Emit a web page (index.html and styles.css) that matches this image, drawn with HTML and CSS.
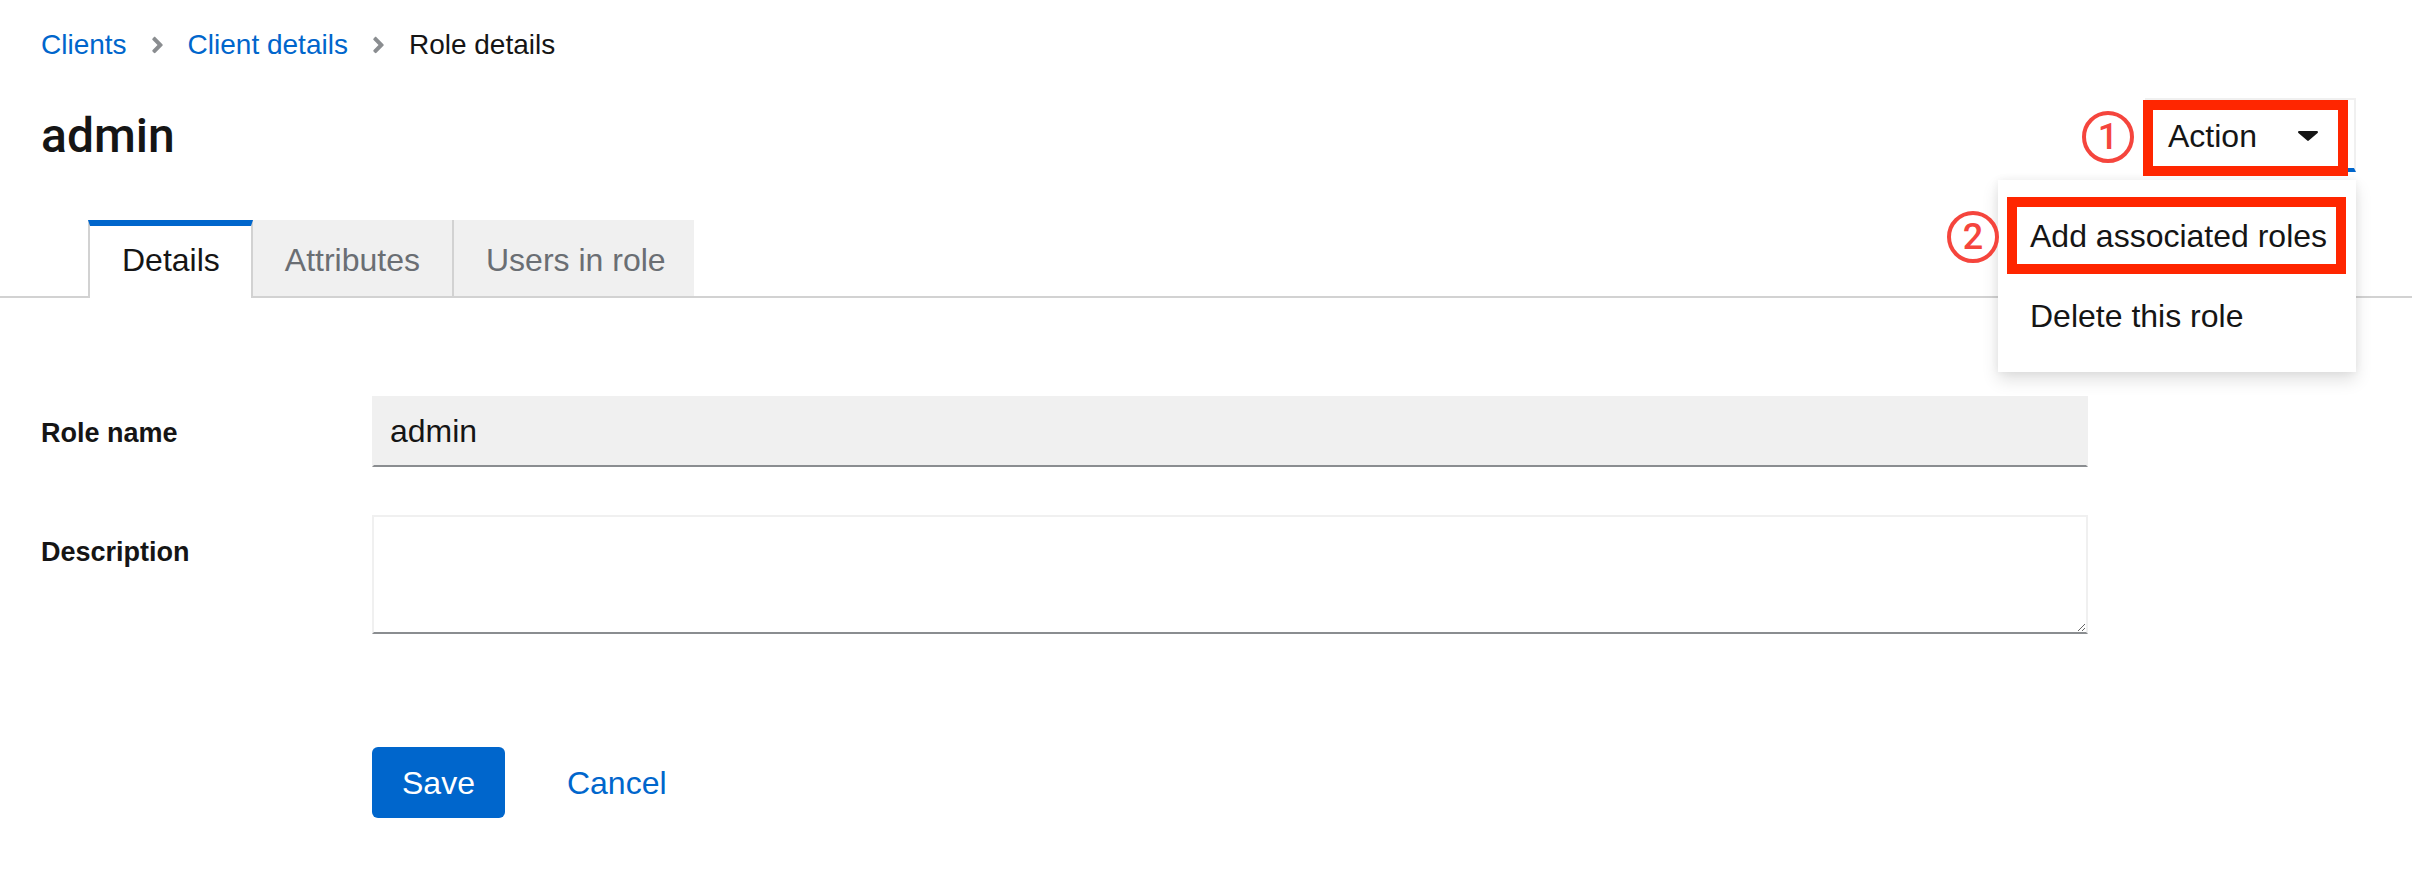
FILE: index.html
```html
<!DOCTYPE html>
<html lang="en">
<head>
<meta charset="utf-8">
<title>Role details</title>
<link rel="stylesheet" href="styles.css">
</head>
<body>
<div class="page">
  <header class="page-header">
    <nav class="breadcrumb">
      <a class="crumb-link" href="#">Clients</a>
      <svg class="chev" viewBox="0 0 256 512"><path d="M224.3 273l-136 136c-9.4 9.4-24.6 9.4-33.9 0l-22.6-22.6c-9.4-9.4-9.4-24.6 0-33.9l96.4-96.4-96.4-96.4c-9.4-9.4-9.4-24.6 0-33.9L54.3 103c9.4-9.4 24.6-9.4 33.9 0l136 136c9.5 9.4 9.5 24.6.1 34z"/></svg>
      <a class="crumb-link" href="#">Client details</a>
      <svg class="chev" viewBox="0 0 256 512"><path d="M224.3 273l-136 136c-9.4 9.4-24.6 9.4-33.9 0l-22.6-22.6c-9.4-9.4-9.4-24.6 0-33.9l96.4-96.4-96.4-96.4c-9.4-9.4-9.4-24.6 0-33.9L54.3 103c9.4-9.4 24.6-9.4 33.9 0l136 136c9.5 9.4 9.5 24.6.1 34z"/></svg>
      <span class="crumb-current">Role details</span>
    </nav>
    <div class="title-row">
      <h1 class="title">admin</h1>
      <div class="dropdown">
        <button class="toggle" type="button">
          <span>Action</span>
          <svg class="caret" viewBox="0 0 20 10"><path d="M1.2 0h17.6c1 0 1.5 1.2.8 1.9L10.8 9.6c-.4.4-1.2.4-1.6 0L.4 1.9C-.3 1.2.2 0 1.2 0z"/></svg>
        </button>
        <div class="mark mark-toggle"></div>
        <div class="num num-toggle">1</div>
        <ul class="menu">
          <li class="menu-item">
            Add associated roles
            <div class="mark mark-item"></div>
            <div class="num num-item">2</div>
          </li>
          <li class="menu-item">Delete this role</li>
        </ul>
      </div>
    </div>
  </header>

  <div class="tabs-bar">
    <ul class="tabs">
      <li class="tab tab-active">Details</li>
      <li class="tab">Attributes</li>
      <li class="tab tab-sep">Users in role</li>
    </ul>
  </div>

  <form class="form">
    <label class="label" for="role-name">Role name</label>
    <input class="input" id="role-name" type="text" value="admin" readonly>
    <label class="label" for="desc">Description</label>
    <textarea class="textarea" id="desc"></textarea>
    <div class="actions">
      <button class="btn-primary" type="button">Save</button>
      <button class="btn-link" type="button">Cancel</button>
    </div>
  </form>
</div>
</body>
</html>
```

FILE: styles.css
```css
* { box-sizing: border-box; }

html, body {
  margin: 0;
  padding: 0;
  background: #ffffff;
}

body {
  font-family: "Liberation Sans", Arial, sans-serif;
  color: #151515;
  width: 2412px;
  height: 896px;
  overflow: hidden;
}

.page-header {
  padding: 24px 56px 0 41px;
}

/* breadcrumb */
.breadcrumb {
  display: flex;
  align-items: center;
  gap: 24px;
  font-size: 28px;
  line-height: 42px;
  height: 42px;
}

.crumb-link {
  color: #0066cc;
  text-decoration: none;
}

.crumb-current {
  color: #151515;
}

.chev {
  width: 13px;
  height: 26px;
  fill: #8a8d90;
  flex: none;
}

/* title row */
.title-row {
  margin-top: 32px;
  display: flex;
  justify-content: space-between;
  align-items: flex-start;
  height: 74px;
}

.title {
  margin: 0;
  font-family: Roboto, "Liberation Sans", sans-serif;
  font-size: 48px;
  line-height: 76px;
  font-weight: 500;
  color: #151515;
}

.dropdown {
  position: relative;
  width: 211px;
  height: 74px;
}

.toggle {
  display: flex;
  align-items: center;
  width: 211px;
  height: 74px;
  padding: 12px 36px 8px 21px;
  border: 2px solid #f0f0f0;
  border-bottom: 4px solid #0066cc;
  background: #ffffff;
  font-family: inherit;
  font-size: 32px;
  line-height: 48px;
  color: #151515;
  text-align: left;
}

.caret {
  width: 20px;
  height: 10px;
  margin-left: auto;
  fill: #151515;
  flex: none;
}

/* dropdown menu */
.menu {
  position: absolute;
  top: 82px;
  right: 0;
  width: 358px;
  margin: 0;
  padding: 16px 0;
  list-style: none;
  background: #ffffff;
  box-shadow: 0 8px 16px 0 rgba(3, 3, 3, 0.12), 0 0 8px 0 rgba(3, 3, 3, 0.06);
  z-index: 5;
}

.menu-item {
  position: relative;
  padding: 16px 32px;
  font-size: 32px;
  line-height: 48px;
  color: #151515;
  white-space: nowrap;
}

/* annotations */
.mark {
  position: absolute;
  border: 10px solid #ff2600;
  pointer-events: none;
}

.mark-toggle {
  left: -2px;
  top: 2px;
  width: 205px;
  height: 76px;
  z-index: 6;
}

.mark-item {
  left: 9px;
  top: 1px;
  width: 339px;
  height: 77px;
}

.num {
  position: absolute;
  width: 52px;
  height: 52px;
  border: 4px solid #f5453d;
  border-radius: 50%;
  color: #f5453d;
  font-family: Roboto, "Liberation Sans", sans-serif;
  font-size: 36px;
  line-height: 44px;
  font-weight: 500;
  text-align: center;
  background: #ffffff;
}

.num-toggle {
  left: -63px;
  top: 13px;
}

.num-item {
  left: -51px;
  top: 15px;
}

/* tabs */
.tabs-bar {
  margin-top: 48px;
  padding-left: 88px;
  border-bottom: 2px solid #d2d2d2;
  height: 78px;
}

.tabs {
  display: flex;
  margin: 0;
  padding: 0;
  list-style: none;
}

.tab {
  height: 76px;
  padding: 16px 32px 12px;
  font-size: 32px;
  line-height: 48px;
  color: #6a6e73;
  background: #f0f0f0;
  white-space: nowrap;
}

.tab-sep {
  border-left: 2px solid #d2d2d2;
  padding-right: 28px;
}

.tab-active {
  height: 78px;
  padding: 10px 31px 14px 32px;
  color: #151515;
  background: #ffffff;
  border-top: 6px solid #0066cc;
  border-left: 2px solid #d2d2d2;
  border-right: 2px solid #d2d2d2;
  position: relative;
  z-index: 1;
}

/* form */
.form {
  margin-top: 98px;
  padding-left: 41px;
  display: grid;
  grid-template-columns: 299px 1716px;
  column-gap: 32px;
  row-gap: 48px;
  align-items: start;
}

.label {
  padding-top: 16px;
  font-size: 27px;
  line-height: 42px;
  font-weight: 700;
  color: #151515;
}

.input {
  display: block;
  width: 100%;
  height: 71px;
  margin: 0;
  padding: 0 16px;
  border: 2px solid #f0f0f0;
  border-bottom-color: #8a8d90;
  background: #f0f0f0;
  font-family: inherit;
  font-size: 32px;
  color: #151515;
  outline: none;
}

.textarea {
  display: block;
  width: 100%;
  height: 119px;
  margin: 0;
  padding: 8px 16px;
  border: 2px solid #f0f0f0;
  border-bottom-color: #8a8d90;
  background: #ffffff;
  font-family: inherit;
  font-size: 32px;
  resize: vertical;
  outline: none;
}

.actions {
  grid-column: 2;
  display: flex;
  gap: 30px;
  margin-top: 65px;
}

.btn-primary {
  height: 71px;
  padding: 0 30px;
  border: 0;
  border-radius: 6px;
  background: #0066cc;
  color: #ffffff;
  font-family: inherit;
  font-size: 32px;
  line-height: 48px;
}

.btn-link {
  height: 71px;
  padding: 0 32px;
  border: 0;
  background: transparent;
  color: #0066cc;
  font-family: inherit;
  font-size: 32px;
  line-height: 48px;
}
```
